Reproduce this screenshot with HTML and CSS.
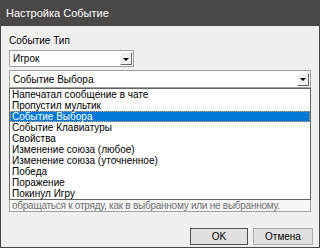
FILE: index.html
```html
<!DOCTYPE html>
<html>
<head>
<meta charset="utf-8">
<link rel="stylesheet" href="styles.css">
</head>
<body>
<div class="window">
  <div class="titlebar">Настройка Событие</div>
  <div class="content">
    <div class="label">Событие Тип</div>
    <div class="combo combo-small">
      <span class="combo-text">Игрок</span>
      <span class="combo-btn"><span class="arrow"></span></span>
    </div>
    <div class="combo-wrap">
      <div class="combo combo-wide">
        <span class="combo-text">Событие Выбора</span>
        <span class="combo-btn"><span class="arrow"></span></span>
      </div>
      <div class="desc">
        <div class="desc-text">обращаться к отряду, как в выбранному или не выбранному.</div>
      </div>
      <ul class="dropdown">
        <li>Напечатал сообщение в чате</li>
        <li>Пропустил мультик</li>
        <li class="selected">Событие Выбора</li>
        <li>Событие Клавиатуры</li>
        <li>Свойства</li>
        <li>Изменение союза (любое)</li>
        <li>Изменение союза (уточненное)</li>
        <li>Победа</li>
        <li>Поражение</li>
        <li>Покинул Игру</li>
      </ul>
    </div>
    <div class="buttons">
      <button class="btn btn-ok">OK</button>
      <button class="btn btn-cancel">Отмена</button>
    </div>
  </div>
</div>
</body>
</html>
```
FILE: styles.css
```css
html, body {
  margin: 0;
  padding: 0;
}
body {
  width: 320px;
  height: 248px;
  overflow: hidden;
  font-family: "Liberation Sans", Arial, sans-serif;
  font-size: 10px;
  color: #000;
}
.window {
  width: 320px;
  height: 248px;
  box-sizing: border-box;
  background: #f0f0f0;
  border: 1px solid #4a4846;
  border-top: none;
  display: flex;
  flex-direction: column;
}
.titlebar {
  height: 26px;
  background: #4a4846;
  color: #ffffff;
  font-size: 11px;
  line-height: 26px;
  padding-left: 6px;
  margin: 0 -1px;
}
.content {
  padding: 7px 0 0 8px;
  position: relative;
  flex: 1;
}
.label {
  height: 13px;
  line-height: 13px;
  margin-top: 1px;
}
.combo {
  box-sizing: border-box;
  background: #fff;
  border: 1px solid #a0a0a0;
  display: flex;
  align-items: center;
  position: relative;
}
.combo-small {
  margin-top: 3px;
  width: 125px;
  height: 17px;
}
.combo-wide {
  width: 302px;
  height: 18px;
}
.combo-wrap {
  margin-top: 3px;
  position: relative;
  width: 302px;
}
.combo-text {
  padding-left: 3px;
  flex: 1;
  line-height: 13px;
}
.combo-btn {
  width: 12px;
  height: 13px;
  margin-right: 1px;
  box-sizing: border-box;
  background: #f0f0f0;
  border: 1px solid;
  border-color: #fff #696969 #696969 #fff;
  display: flex;
  align-items: center;
  justify-content: center;
}
.arrow {
  width: 0;
  height: 0;
  border-left: 3px solid transparent;
  border-right: 3px solid transparent;
  border-top: 3px solid #000;
  margin-top: 1px;
}
.desc {
  box-sizing: border-box;
  height: 124px;
  border: 1px solid #a0a0a0;
  background: #f7f7f7;
  display: flex;
  align-items: flex-end;
}
.desc-text {
  color: #707070;
  padding: 0 0 0 2px;
  height: 11px;
  line-height: 11px;
  letter-spacing: -0.25px;
  white-space: nowrap;
}
.dropdown {
  position: absolute;
  left: 0;
  top: 18px;
  width: 302px;
  box-sizing: border-box;
  margin: 0;
  padding: 0;
  list-style: none;
  background: #fff;
  border: 1px solid #646464;
}
.dropdown li {
  height: 11px;
  line-height: 11px;
  padding-left: 2px;
  white-space: nowrap;
}
.dropdown li.selected {
  background: #0078d7;
  color: #fff;
  outline: 1px dotted #e0a060;
  outline-offset: -1px;
}
.buttons {
  display: flex;
  justify-content: flex-end;
  gap: 5px;
  margin-top: 16px;
  margin-right: 6px;
}
.btn {
  box-sizing: border-box;
  height: 17px;
  font-family: "Liberation Sans", Arial, sans-serif;
  font-size: 10px;
  background: #e1e1e1;
  border: 1px solid #adadad;
  padding: 0;
  color: #000;
}
.btn-ok {
  width: 58px;
  border-color: #505050;
}
.btn-cancel {
  width: 60px;
}
```
